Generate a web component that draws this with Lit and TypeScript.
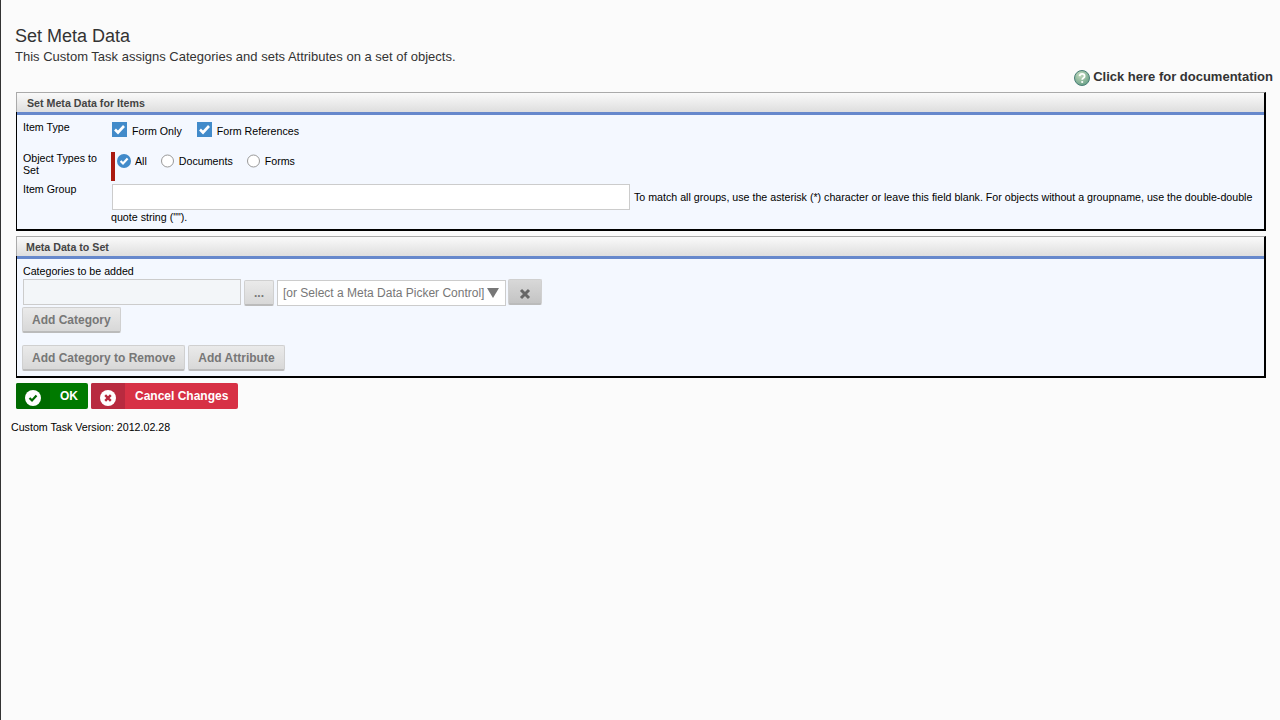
import { LitElement, html, css } from "lit";
import { customElement } from "lit/decorators.js";

const check = html`<svg class="cb" viewBox="0 0 15 15"><rect width="15" height="15" fill="#428bca"/><path d="M3 7.5l3 3 6-6.5" fill="none" stroke="#fff" stroke-width="2.6"/></svg>`;
const radioOn = html`<svg class="rd" viewBox="0 0 14 14"><circle cx="7" cy="7" r="7" fill="#428bca"/><path d="M3.6 7l2.4 2.5 4.6-5" fill="none" stroke="#fff" stroke-width="2.2"/></svg>`;
const radioOff = html`<svg class="rd" viewBox="0 0 14 14"><circle cx="6.5" cy="7" r="6" fill="#fff" stroke="#999" stroke-width="1"/></svg>`;

@customElement("app-root")
export class AppRoot extends LitElement {
  static styles = css`
    :host { display: block; height: 720px; box-sizing: border-box; background: #fbfbfb; border-left: 1px solid #333; font-family: "Liberation Sans", Arial, sans-serif; font-size: 10.667px; color: #000; overflow: hidden; }
    .title { margin: 0; padding: 26px 0 0 14px; font-size: 18px; font-weight: 400; line-height: 20px; color: #333; }
    .sub { padding: 3px 0 0 14px; font-size: 13px; line-height: 15px; color: #333; }
    .doc { display: flex; justify-content: flex-end; align-items: center; gap: 3px; padding: 2px 7px 0 0; height: 21px; box-sizing: border-box; font-size: 13px; font-weight: 700; color: #333; margin-top: 1px; }
    .doc svg { width: 16px; height: 16px; margin-top: 3px; }
    .panel { margin-left: 15px; width: 1250px; box-sizing: border-box; border: solid #000; border-width: 0 2px 2px 1px; }
    .first { margin-top: 6px; }
    .panel + .panel { margin-top: 5px; }
    .head { margin: 0 -2px 0 -1px; height: 19px; box-sizing: content-box; border: solid #aaa; border-width: 1px 0 0 1px; padding-left: 10px; line-height: 20px; font-size: 10.667px; font-weight: 700; color: #444; background: linear-gradient(#fafafa, #dedede); border-right: 2px solid #000; }
    .head.h2 { padding-left: 9px; }
    .bar { height: 3px; background: #6688cc; }
    .body { background: #f4f8ff; }
    .p1 { height: 114px; padding: 0 0 0 6px; box-sizing: border-box; }
    .row { display: flex; }
    .lab { width: 88px; flex: none; line-height: 12px; }
    .up { margin-top: -1px; }
    .r1 { padding-top: 7px; height: 37px; box-sizing: border-box; }
    .opts { display: flex; align-items: center; height: 15px; margin-top: 1px; }
    .cb { width: 15px; height: 15px; margin: -2px 5px 0 1px; flex: none; }
    .o2 { margin-left: 14px; display: flex; align-items: center; }
    .r2 { height: 29px; }
    .flag { border-left: 4px solid #aa1a10; height: 29px; display: flex; align-items: flex-start; padding: 2px 0 0 2px; box-sizing: border-box; }
    .rd { width: 14px; height: 14px; margin-right: 4px; flex: none; }
    .flag span { margin-right: 14px; line-height: 14px; }
    .r3 { padding-top: 3px; }
    .grp { flex: 1; line-height: 15px; }
    .input { width: 518px; height: 26px; box-sizing: border-box; background: #fff; border: 1px solid #ccc; margin: 0 4px 0 1px; }
    .grpline { display: flex; align-items: flex-end; height: 26px; }
    .grpline span { line-height: 14px; padding-bottom: 6px; white-space: nowrap; }
    .note2 { line-height: 14px; }
    .p2 { height: 117px; padding: 6px 0 0 6px; box-sizing: border-box; }
    .cap { line-height: 13px; }
    .pick { display: flex; margin-top: 1px; height: 27px; }
    .tf { width: 218px; height: 26px; box-sizing: border-box; border: 1px solid #ccc; background: #f3f6f9; }
    .btn { display: inline-flex; align-items: center; justify-content: center; box-sizing: border-box; height: 26px; background: linear-gradient(#eaeaea, #d8d8d8); border: 1px solid #d0d0d0; border-bottom: 2px solid #bbb; border-radius: 2px; color: #777; font-size: 12px; font-weight: 700; padding: 0 9px; }
    .dots { width: 30px; margin: 1px 0 0 3px; padding: 0; }
    .sel { width: 229px; height: 26px; box-sizing: border-box; margin: 1px 0 0 3px; background: #fff; border: 1px solid #ccc; color: #777; font-size: 12px; display: flex; align-items: center; padding-left: 5px; white-space: nowrap; }
    .sel i { width: 0; height: 0; border: solid transparent; border-width: 10px 6px 0; border-top-color: #777; margin-left: 3px; }
    .x { width: 34px; margin-left: 2px; padding: 0; background: linear-gradient(#d8d8d8, #c4c4c4); }
    .x svg { width: 12px; height: 12px; margin-top: 4px; }
    .b1 { margin: 1px 0 0 -1px; display: flex; }
    .b2 { margin: 12px 0 0 -1px; display: flex; gap: 3px; }
    .actions { display: flex; gap: 3px; margin: 5px 0 0 15px; }
    .act { height: 26px; display: flex; border-radius: 2px; overflow: hidden; color: #fff; font-size: 12px; font-weight: 700; }
    .ic { width: 34px; display: flex; align-items: center; justify-content: center; }
    .ic svg { width: 16px; height: 16px; margin-top: 3px; }
    .t { display: flex; align-items: center; box-sizing: border-box; }
    .ok { width: 72px; background: #007a00; }
    .ok .ic { background: #006a00; }
    .ok .t { flex: 1; justify-content: center; padding-left: 0; }
    .cancel { width: 147px; background: #d73145; }
    .cancel .ic { background: #b82a3f; }
    .cancel .t { padding-left: 10px; }
    .ver { padding: 12px 0 0 10px; line-height: 13px; }
  `;

  render() {
    return html`
      <h1 class="title">Set Meta Data</h1>
      <div class="sub">This Custom Task assigns Categories and sets Attributes on a set of objects.</div>
      <div class="doc">
        <svg viewBox="0 0 16 16">
          <defs><radialGradient id="q" cx=".4" cy=".3" r=".8"><stop offset="0" stop-color="#c6dcc0"/><stop offset="1" stop-color="#5f9a80"/></radialGradient></defs>
          <circle cx="8" cy="8" r="7.5" fill="url(#q)" stroke="#4a7f78" stroke-width="1"/>
          <path d="M5.6 6.2c.3-3 5-3 5 0 0 2-2.4 1.8-2.4 3.6" fill="none" stroke="#fff" stroke-width="1.8"/>
          <circle cx="8.2" cy="12" r="1.1" fill="#fff"/>
        </svg>
        Click here for documentation
      </div>

      <section class="panel first">
        <div class="head">Set Meta Data for Items</div>
        <div class="bar"></div>
        <div class="body p1">
          <div class="row r1">
            <div class="lab up">Item Type</div>
            <div class="opts">${check}<span>Form Only</span><span class="o2">${check}<span>Form References</span></span></div>
          </div>
          <div class="row r2">
            <div class="lab">Object Types to Set</div>
            <div class="flag">${radioOn}<span>All</span>${radioOff}<span>Documents</span>${radioOff}<span>Forms</span></div>
          </div>
          <div class="row r3">
            <div class="lab up">Item Group</div>
            <div class="grp">
              <div class="grpline"><div class="input"></div><span>To match all groups, use the asterisk (*) character or leave this field blank. For objects without a groupname, use the double-double</span></div>
              <div class="note2">quote string ("").</div>
            </div>
          </div>
        </div>
      </section>

      <section class="panel">
        <div class="head h2">Meta Data to Set</div>
        <div class="bar"></div>
        <div class="body p2">
          <div class="cap">Categories to be added</div>
          <div class="pick">
            <div class="tf"></div>
            <div class="btn dots">...</div>
            <div class="sel">[or Select a Meta Data Picker Control]<i></i></div>
            <div class="btn x"><svg viewBox="0 0 12 12"><path d="M2 2l8 8M10 2l-8 8" stroke="#666" stroke-width="3"/></svg></div>
          </div>
          <div class="b1"><div class="btn">Add Category</div></div>
          <div class="b2"><div class="btn">Add Category to Remove</div><div class="btn">Add Attribute</div></div>
        </div>
      </section>

      <div class="actions">
        <div class="act ok">
          <div class="ic"><svg viewBox="0 0 16 16"><circle cx="8" cy="8" r="8" fill="#fff"/><path d="M4.5 8l2.5 2.5 4.5-5" fill="none" stroke="#006a00" stroke-width="2.2"/></svg></div>
          <div class="t">OK</div>
        </div>
        <div class="act cancel">
          <div class="ic"><svg viewBox="0 0 16 16"><circle cx="8" cy="8" r="8" fill="#fff"/><path d="M5.2 5.2l5.6 5.6M10.8 5.2l-5.6 5.6" stroke="#b82a3f" stroke-width="2.4"/></svg></div>
          <div class="t">Cancel Changes</div>
        </div>
      </div>
      <div class="ver">Custom Task Version: 2012.02.28</div>
    `;
  }
}
